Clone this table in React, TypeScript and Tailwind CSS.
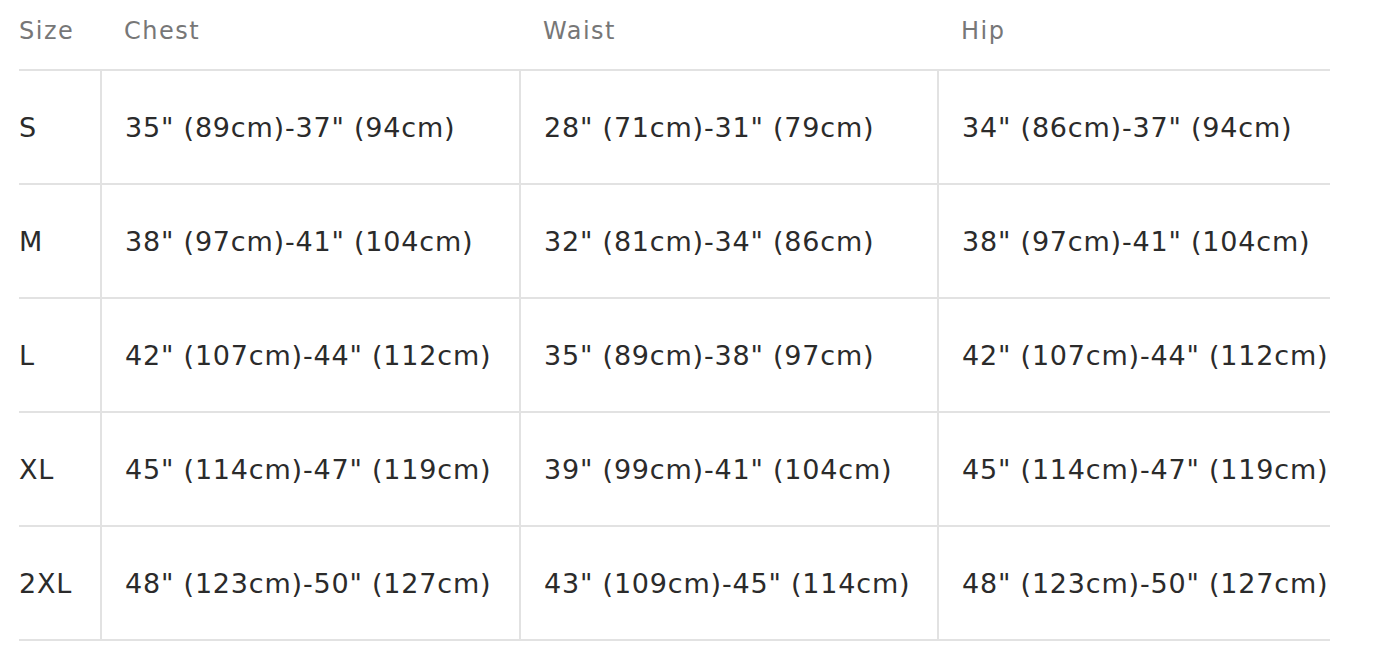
import React from 'react';

const rows = [
  ['S', '35" (89cm)-37" (94cm)', '28" (71cm)-31" (79cm)', '34" (86cm)-37" (94cm)'],
  ['M', '38" (97cm)-41" (104cm)', '32" (81cm)-34" (86cm)', '38" (97cm)-41" (104cm)'],
  ['L', '42" (107cm)-44" (112cm)', '35" (89cm)-38" (97cm)', '42" (107cm)-44" (112cm)'],
  ['XL', '45" (114cm)-47" (119cm)', '39" (99cm)-41" (104cm)', '45" (114cm)-47" (119cm)'],
  ['2XL', '48" (123cm)-50" (127cm)', '43" (109cm)-45" (114cm)', '48" (123cm)-50" (127cm)'],
];

export default function App() {
  return (
    <div className="min-h-screen bg-white font-['DejaVu_Sans',sans-serif]">
      <div className="ml-[19px] grid w-[1311px] grid-cols-[83px_419px_418px_391px]">
        <div className="flex h-[71px] items-start border-b-2 border-[#e2e2e2] pt-[13px] text-[24px] tracking-[1.5px] text-[#777]">Size</div>
        <div className="flex h-[71px] items-start border-b-2 border-[#e2e2e2] pl-[22px] pt-[13px] text-[24px] tracking-[1.5px] text-[#777]">Chest</div>
        <div className="flex h-[71px] items-start border-b-2 border-[#e2e2e2] pl-[22px] pt-[13px] text-[24px] tracking-[1.5px] text-[#777]">Waist</div>
        <div className="flex h-[71px] items-start border-b-2 border-[#e2e2e2] pl-[22px] pt-[13px] text-[24px] tracking-[1.5px] text-[#777]">Hip</div>
        {rows.map((r) => (
          <React.Fragment key={r[0]}>
            <div className="flex h-[114px] items-center whitespace-nowrap border-b-2 border-r-2 border-[#e2e2e2] pt-[2px] text-[27px] tracking-[0.8px] text-[#2b2b2b]">{r[0]}</div>
            <div className="flex h-[114px] items-center whitespace-nowrap border-b-2 border-r-2 border-[#e2e2e2] pl-[23px] pt-[2px] text-[27px] tracking-[0.8px] text-[#2b2b2b]">{r[1]}</div>
            <div className="flex h-[114px] items-center whitespace-nowrap border-b-2 border-r-2 border-[#e2e2e2] pl-[23px] pt-[2px] text-[27px] tracking-[0.8px] text-[#2b2b2b]">{r[2]}</div>
            <div className="flex h-[114px] items-center whitespace-nowrap border-b-2 border-[#e2e2e2] pl-[23px] pt-[2px] text-[27px] tracking-[0.8px] text-[#2b2b2b]">{r[3]}</div>
          </React.Fragment>
        ))}
      </div>
    </div>
  );
}
